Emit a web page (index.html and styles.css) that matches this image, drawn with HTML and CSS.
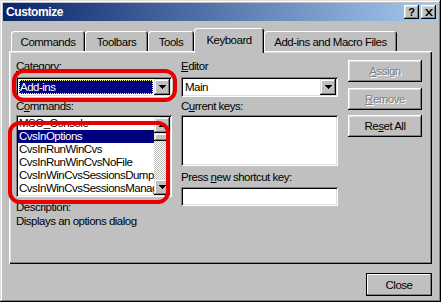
FILE: index.html
```html
<!DOCTYPE html>
<html lang="en">
<head>
    <meta charset="UTF-8">
    <title>Customize</title>
    <link rel="stylesheet" href="styles.css">
</head>
<body>
    <div class="window">
        <div class="titlebar">
            <span class="title">Customize</span>
            <div class="caption-btns">
                <span class="cap-btn">?</span>
                <span class="cap-btn">
                    <svg width="8" height="7" viewBox="0 0 8 7"><path d="M0 0h2l2 2.4L6 0h2L5 3.5 8 7H6L4 4.6 2 7H0l3-3.5z" fill="#000"/></svg>
                </span>
            </div>
        </div>

        <div class="tabs">
            <div class="tab tab-commands">Commands</div>
            <div class="tab tab-toolbars">Toolbars</div>
            <div class="tab tab-tools">Tools</div>
            <div class="tab tab-keyboard active">Keyboard</div>
            <div class="tab tab-addins">Add-ins and Macro Files</div>
        </div>

        <div class="panel">
            <div class="col col-left">
                <div class="label"><u>C</u>ategory:</div>
                <div class="combo">
                    <span class="combo-text selected">Add-ins</span>
                    <span class="drop-btn">
                        <svg width="7" height="4" viewBox="0 0 7 4"><path d="M0 0h7v1H0zM1 1h5v1H1zM2 2h3v1H2zM3 3h1v1H3z" fill="#000"/></svg>
                    </span>
                </div>
                <div class="label label-gap">C<u>o</u>mmands:</div>
                <div class="listbox commands">
                    <div class="list-items">
                        <div class="item">MSO_Console</div>
                        <div class="item sel">CvsInOptions</div>
                        <div class="item">CvsInRunWinCvs</div>
                        <div class="item">CvsInRunWinCvsNoFile</div>
                        <div class="item">CvsInWinCvsSessionsDump</div>
                        <div class="item">CvsInWinCvsSessionsManager</div>
                    </div>
                    <div class="scrollbar">
                        <span class="sb-btn">
                            <svg width="7" height="4" viewBox="0 0 7 4"><path d="M3 0h1v1H3zM2 1h3v1H2zM1 2h5v1H1zM0 3h7v1H0z" fill="#000"/></svg>
                        </span>
                        <span class="sb-thumb"></span>
                        <span class="sb-track"></span>
                        <span class="sb-btn">
                            <svg width="7" height="4" viewBox="0 0 7 4"><path d="M0 0h7v1H0zM1 1h5v1H1zM2 2h3v1H2zM3 3h1v1H3z" fill="#000"/></svg>
                        </span>
                    </div>
                </div>
                <div class="label label-desc">Description:</div>
                <div class="desc">Displays an options dialog</div>
            </div>

            <div class="col col-mid">
                <div class="label"><u>E</u>ditor</div>
                <div class="combo">
                    <span class="combo-text">Main</span>
                    <span class="drop-btn">
                        <svg width="7" height="4" viewBox="0 0 7 4"><path d="M0 0h7v1H0zM1 1h5v1H1zM2 2h3v1H2zM3 3h1v1H3z" fill="#000"/></svg>
                    </span>
                </div>
                <div class="label label-gap">C<u>u</u>rrent keys:</div>
                <div class="field keys"></div>
                <div class="label label-press">Press <u>n</u>ew shortcut key:</div>
                <div class="field shortcut"></div>
            </div>

            <div class="col col-btns">
                <button class="btn" disabled><u>A</u>ssign</button>
                <button class="btn btn-remove" disabled><u>R</u>emove</button>
                <button class="btn btn-reset">Re<u>s</u>et All</button>
            </div>
        </div>

        <div class="footer">
            <button class="btn btn-default">Close</button>
        </div>

        <!-- red annotation marks -->
        <div class="mark mark-category"></div>
        <div class="mark mark-commands"></div>
    </div>
</body>
</html>
```

FILE: styles.css
```css
body {
    margin: 0;
    background: #c0c0c0;
}

.window {
    position: relative;
    width: 441px;
    height: 302px;
    box-sizing: border-box;
    padding: 3px;
    display: flex;
    flex-direction: column;
    background: #c0c0c0;
    box-shadow: inset -1px -1px #000, inset 1px 1px #dfdfdf, inset -2px -2px #808080, inset 2px 2px #fff;
    font-family: "Liberation Sans", Arial, sans-serif;
    font-size: 11.5px;
    letter-spacing: -0.5px;
    color: #000;
}

u {
    text-decoration-thickness: 1px;
    text-underline-offset: 1px;
}

/* title bar */
.titlebar {
    height: 18px;
    flex: none;
    display: flex;
    align-items: center;
    justify-content: space-between;
    padding: 0 2px 0 3px;
    background: linear-gradient(to right, #0a246a, #a6caf0);
}

.title {
    color: #fff;
    font-weight: bold;
    font-size: 12px;
    letter-spacing: -0.4px;
}

.caption-btns {
    display: flex;
    gap: 2px;
}

.cap-btn {
    width: 15px;
    height: 14px;
    box-sizing: border-box;
    display: flex;
    align-items: center;
    justify-content: center;
    background: #c0c0c0;
    box-shadow: inset -1px -1px #000, inset 1px 1px #fff, inset -2px -2px #808080, inset 2px 2px #dfdfdf;
    font-weight: bold;
    font-size: 11px;
    letter-spacing: 0;
    line-height: 14px;
}

/* tabs */
.tabs {
    height: 23px;
    flex: none;
    margin-top: 7px;
    padding-left: 8px;
    display: flex;
    align-items: flex-end;
}

.tab {
    height: 20px;
    box-sizing: border-box;
    display: flex;
    align-items: center;
    justify-content: center;
    padding-top: 1px;
    border-radius: 3px 3px 0 0;
    background: #c0c0c0;
    box-shadow: inset 1px 1px #fff, inset -1px 0 #000, inset -2px 0 #808080;
}

.tab-commands { width: 74px; }
.tab-toolbars { width: 63px; }
.tab-tools { width: 46px; }
.tab-keyboard { width: 70px; }
.tab-addins { width: 133px; }

.tab.active {
    position: relative;
    z-index: 1;
    height: 25px;
    margin-bottom: -2px;
    padding-top: 0;
    padding-bottom: 2px;
}

/* tab page */
.panel {
    height: 213px;
    flex: none;
    box-sizing: border-box;
    margin: 0 6px;
    padding: 9px 0 0 7px;
    display: flex;
    gap: 9px;
    box-shadow: inset 1px 1px #fff, inset -1px -1px #000, inset -2px -2px #808080, inset 2px 2px #dfdfdf;
}

.col {
    display: flex;
    flex-direction: column;
}

.col-left { width: 156px; }
.col-mid { width: 157px; }
.col-btns { width: 74px; margin-left: 1px; }

.label {
    height: 13px;
    line-height: 13px;
    margin-bottom: 4px;
    white-space: nowrap;
}

.label-gap {
    margin-top: 3px;
    margin-bottom: 2px;
}

.label-desc {
    margin-top: 4px;
    margin-bottom: 1px;
}

.label-press {
    margin-top: 5px;
    margin-bottom: 3px;
}

.desc {
    line-height: 13px;
    white-space: nowrap;
}

/* sunken controls */
.combo,
.listbox,
.field {
    box-sizing: border-box;
    padding: 2px;
    background: #fff;
    box-shadow: inset 1px 1px #808080, inset -1px -1px #fff, inset 2px 2px #000, inset -2px -2px #dfdfdf;
}

.combo {
    height: 20px;
    display: flex;
}

.combo-text {
    flex: 1;
    margin: 1px 1px 1px 1px;
    padding-left: 1px;
    line-height: 14px;
}

.combo-text.selected {
    background: #000080;
    color: #fff;
    outline: 1px dotted #ffff80;
    outline-offset: -1px;
}

.drop-btn,
.sb-btn {
    width: 16px;
    height: 16px;
    flex: none;
    box-sizing: border-box;
    display: flex;
    align-items: center;
    justify-content: center;
    background: #c0c0c0;
    box-shadow: inset -1px -1px #000, inset 1px 1px #dfdfdf, inset -2px -2px #808080, inset 2px 2px #fff;
}

.listbox {
    display: flex;
}

.listbox.commands {
    height: 82px;
}

.list-items {
    flex: 1;
    min-width: 0;
    overflow: hidden;
}

.item {
    height: 13px;
    line-height: 13px;
    padding-left: 1px;
    white-space: nowrap;
}

.item.sel {
    background: #000080;
    color: #fff;
}

.scrollbar {
    width: 16px;
    display: flex;
    flex-direction: column;
    background: repeating-conic-gradient(#c0c0c0 0 25%, #fff 0 50%) 0 0 / 2px 2px;
}

.sb-thumb {
    height: 8px;
    background: #c0c0c0;
    box-shadow: inset -1px -1px #000, inset 1px 1px #dfdfdf, inset -2px -2px #808080, inset 2px 2px #fff;
}

.sb-track {
    flex: 1;
}

.field.keys {
    height: 51px;
}

.field.shortcut {
    height: 19px;
}

/* buttons */
.btn {
    width: 74px;
    height: 22px;
    padding: 0;
    border: none;
    background: #c0c0c0;
    box-shadow: inset -1px -1px #000, inset 1px 1px #fff, inset -2px -2px #808080, inset 2px 2px #dfdfdf;
    font: inherit;
    letter-spacing: inherit;
    color: #000;
}

.btn:disabled {
    color: #808080;
    text-shadow: 1px 1px #fff;
}

.btn-remove { margin-top: 6px; }
.btn-reset { margin-top: 5px; }

.footer {
    flex: none;
    display: flex;
    justify-content: flex-end;
    padding: 9px 6px 0 0;
}

.btn-default {
    width: 66px;
    height: 23px;
    box-shadow: inset 0 0 0 1px #000, inset -2px -2px #808080, inset 2px 2px #fff;
}

/* red highlight marks drawn over the dialog */
.mark {
    position: absolute;
    box-sizing: border-box;
    border: 4px solid #e60000;
    border-radius: 12px;
}

.mark-category {
    left: 12px;
    top: 69px;
    width: 165px;
    height: 33px;
}

.mark-commands {
    left: 8px;
    top: 121px;
    width: 162px;
    height: 83px;
}
```
